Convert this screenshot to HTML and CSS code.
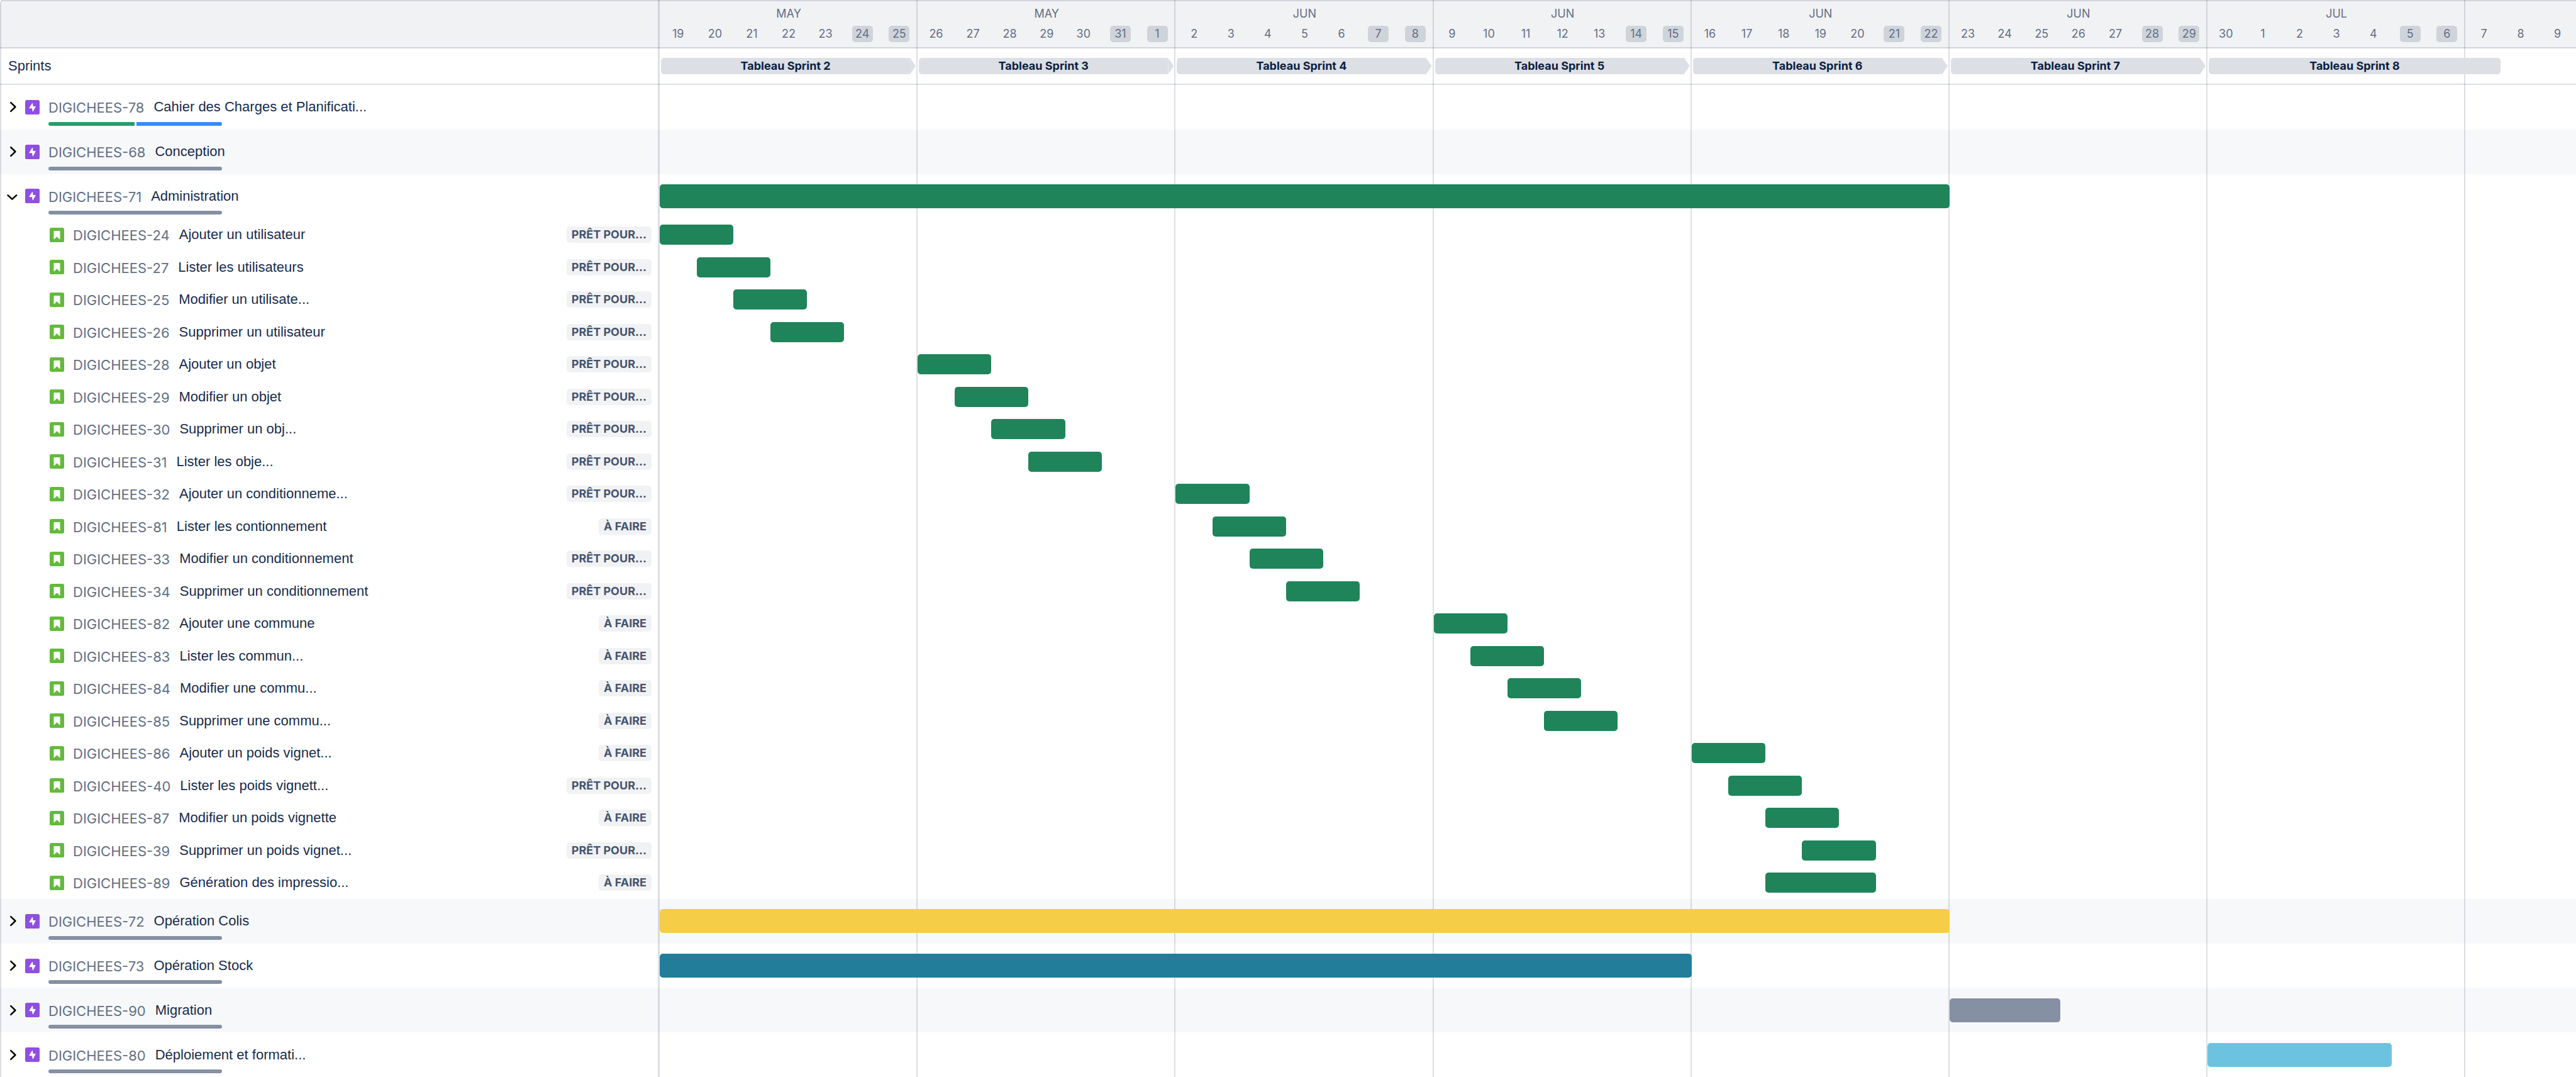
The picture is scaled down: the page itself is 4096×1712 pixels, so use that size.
FILE: index.html
```html
<!DOCTYPE html>
<html lang="fr">
<head>
<meta charset="utf-8">
<title>Chronologie DIGICHEES</title>
<link rel="stylesheet" href="styles.css">
</head>
<body>
<svg class="sprite" aria-hidden="true">
  <symbol id="i-right" viewBox="0 0 24 24"><path d="M8.700 3.800l8.600 8.200-8.600 8.200" fill="none" stroke="currentColor" stroke-width="3" stroke-linecap="round" stroke-linejoin="round"/></symbol>
  <symbol id="i-down" viewBox="0 0 24 24"><path d="M3 10l8.200 7.500 8.200-7.500" fill="none" stroke="currentColor" stroke-width="3" stroke-linecap="round" stroke-linejoin="round"/></symbol>
  <symbol id="i-epic" viewBox="0 0 16 16"><rect width="16" height="16" rx="2" fill="#904ee2"/><path d="M8 3.800 4.900 8.800H8l.5 3.500 2.700-5H8.400z" fill="#fff" stroke="#fff" stroke-width=".8" stroke-linejoin="round"/></symbol>
  <symbol id="i-story" viewBox="0 0 16 16"><rect width="16" height="16" rx="2" fill="#63ba3c"/><path d="M5.200 3.400h5.600a.7.7 0 0 1 .7.7v8.200c0 .5-.5.700-.8.300L8 9.900l-2.700 2.700c-.3.400-.8.200-.8-.3V4.100a.7.7 0 0 1 .7-.7z" fill="#fff"/></symbol>
</svg>
<main class="chart" id="chart"></main>
<script src="app.js"></script>
</body>
</html>
```
FILE: styles.css
```css
:root {
  --sidebar: 1049px;
  --line: rgba(9, 30, 66, 0.14);
  --text: #172b4d;
  --subtle: #626f86;
  --radius: 5px;
}

* { box-sizing: border-box; }

body {
  margin: 0;
  background: #fff;
  color: var(--text);
  font-family: "Liberation Sans", Arial, sans-serif;
  font-size: 22px;
  line-height: 26px;
}

.sprite { position: absolute; width: 0; height: 0; }

.chart {
  position: relative;
  display: flex;
  flex-direction: column;
  min-height: 100vh;
  border-top-left-radius: var(--radius);
  overflow: hidden;
}

/* Every row: issue details on the left, 52 days on the right */
.row,
.gridlines {
  display: grid;
  grid-template-columns: var(--sidebar) minmax(0, 1fr);
}

.days {
  display: grid;
  grid-template-columns: repeat(52, minmax(0, 1fr));
  align-items: center;
}

.header {
  flex: none;
  background: #f1f2f4;
  border-top: 2px solid #d1d5db;
  border-bottom: 2px solid #d1d5db;
}

.header .days {
  padding: 7px 0 8px;
  row-gap: 6px;
  color: var(--subtle);
  font-family: Inter, sans-serif;
  font-size: 18px;
  text-align: center;
}

.month { grid-row: 1; }

.day {
  grid-row: 2;
  justify-self: center;
  width: 33px;
  border-radius: var(--radius);
}

.day.weekend { background: #cfd4db; }

.sprints {
  flex: none;
  padding: 15px 0;
  border-bottom: 2px solid #dcdfe4;
}

.sprints .title { padding-left: 13px; }

.sprint {
  position: relative;
  grid-row: 1;
  z-index: 1;
  display: flex;
  margin: 0 3px 0 2px;
  color: #091e42;
  font-family: Inter, sans-serif;
  font-size: 18px;
  font-weight: 700;
  text-align: center;
}

.sprint span {
  flex: 1;
  border-radius: var(--radius) 0 0 var(--radius);
  background: #dcdfe4;
}

.sprint::after {
  content: "";
  width: 9px;
  background: #dcdfe4;
  clip-path: polygon(0 0, 100% 50%, 0 100%);
}

.sprint.open span { border-radius: var(--radius); }
.sprint.open::after { display: none; }

.epic { flex: 88 0 0; }
.story { flex: 64 0 0; }
.striped { background: #f7f8fa; }

.issue {
  position: relative;
  display: flex;
  align-items: center;
  min-width: 0;
}

.epic .issue { padding-left: 10px; }
.story .issue { padding: 0 13px 0 79px; }

.toggle {
  display: flex;
  margin: 0 10px 0 0;
  padding: 0;
  border: 0;
  background: none;
  color: #000;
}

.toggle svg { width: 20px; height: 20px; }

.type {
  flex: none;
  width: 23px;
  height: 23px;
  margin-right: 14px;
}

.key {
  padding-top: 2px;
  margin-right: 15px;
  color: var(--subtle);
  font-family: Inter, sans-serif;
  text-decoration: none;
}

.status {
  margin-left: auto;
  padding: 0 8px;
  border-radius: var(--radius);
  background: #f1f2f4;
  color: #44546f;
  font-family: Inter, sans-serif;
  font-size: 18px;
  font-weight: 700;
}

.progress {
  position: absolute;
  left: 77px;
  bottom: 6px;
  display: flex;
  gap: 3px;
  width: 276px;
  height: 6px;
  border-radius: 3px;
  overflow: hidden;
}

.progress i { flex: 1; }

.bar {
  position: relative;
  z-index: 1;
  height: 32px;
  border-radius: var(--radius);
}

.epic .bar { height: 38px; }

.green { background: #1f845a; }
.yellow { background: #f5cd47; }
.teal { background: #227d9b; }
.gray { background: #8590a2; }
.sky { background: #6cc3e0; }
.done { background: #22a06b; }
.doing { background: #388bff; }

/* Week separators behind the bars */
.gridlines {
  position: absolute;
  inset: 0;
  border-left: 2px solid var(--line);
  border-top-left-radius: var(--radius);
  grid-template-columns: calc(var(--sidebar) - 2px) minmax(0, 1fr);
  pointer-events: none;
}

.gridlines .side { border-right: 3px solid var(--line); }
.gridlines .days { align-items: stretch; }
.gridlines .week { border-right: 2px solid var(--line); }
```
FILE: app.js
```js
const months = ["MAY", "MAY", "JUN", "JUN", "JUN", "JUN", "JUL"];
const firstDay = new Date(Date.UTC(2025, 4, 19));
const dayCount = 52;

// Epics: key, name, bar start, bar length, colour, progress segments
const epics = [
  [78, "Cahier des Charges et Planificati...", 0, 0, "", ["done", "doing"]],
  [68, "Conception", 0, 0, "", ["gray"]],
  [71, "Administration", 1, 35, "green", ["gray"]],
  [72, "Opération Colis", 1, 35, "yellow", ["gray"]],
  [73, "Opération Stock", 1, 28, "teal", ["gray"]],
  [90, "Migration", 36, 3, "gray", ["gray"]],
  [80, "Déploiement et formati...", 43, 5, "sky", ["gray"]]
];

const READY = "PRÊT POUR...";
const TODO = "À FAIRE";

// Stories of the expanded epic: key, name, status, bar start, bar length
const stories = [
  [24, "Ajouter un utilisateur", READY, 1, 2],
  [27, "Lister les utilisateurs", READY, 2, 2],
  [25, "Modifier un utilisate...", READY, 3, 2],
  [26, "Supprimer un utilisateur", READY, 4, 2],
  [28, "Ajouter un objet", READY, 8, 2],
  [29, "Modifier un objet", READY, 9, 2],
  [30, "Supprimer un obj...", READY, 10, 2],
  [31, "Lister les obje...", READY, 11, 2],
  [32, "Ajouter un conditionneme...", READY, 15, 2],
  [81, "Lister les contionnement", TODO, 16, 2],
  [33, "Modifier un conditionnement", READY, 17, 2],
  [34, "Supprimer un conditionnement", READY, 18, 2],
  [82, "Ajouter une commune", TODO, 22, 2],
  [83, "Lister les commun...", TODO, 23, 2],
  [84, "Modifier une commu...", TODO, 24, 2],
  [85, "Supprimer une commu...", TODO, 25, 2],
  [86, "Ajouter un poids vignet...", TODO, 29, 2],
  [40, "Lister les poids vignett...", READY, 30, 2],
  [87, "Modifier un poids vignette", TODO, 31, 2],
  [39, "Supprimer un poids vignet...", READY, 32, 2],
  [89, "Génération des impressio...", TODO, 31, 3]
];

const span = (start, length) => `style="grid-column:${start} / span ${length}"`;
const icon = (name, cls) => `<svg class="${cls}" aria-hidden="true"><use href="#i-${name}"/></svg>`;
const bar = (start, length, colour) => length ? `<div class="bar ${colour}" ${span(start, length)}></div>` : "";
const label = (key, name) => `<a class="key" href="#${key}">DIGICHEES-${key}</a><span>${name}</span>`;

function header() {
  let cells = months.map((m, i) => `<div class="month" ${span(i * 7 + 1, 7)}>${m}</div>`).join("");
  for (let i = 0; i < dayCount; i++) {
    const date = new Date(firstDay.getTime() + i * 864e5);
    const weekend = i % 7 > 4 ? " weekend" : "";
    cells += `<div class="day${weekend}" ${span(i + 1, 1)}>${date.getUTCDate()}</div>`;
  }
  return `<header class="row header"><div></div><div class="days">${cells}</div></header>`;
}

function sprints() {
  let cells = "";
  for (let i = 0; i < 7; i++) {
    const last = i === 6;
    cells += `<div class="sprint${last ? " open" : ""}" ${span(i * 7 + 1, last ? 8 : 7)}><span>Tableau Sprint ${i + 2}</span></div>`;
  }
  return `<div class="row sprints"><div class="title">Sprints</div><div class="days">${cells}</div></div>`;
}

function epicRow([key, name, start, length, colour, progress], index) {
  const open = key === 71;
  return `<div class="row epic${index % 2 ? " striped" : ""}"><div class="issue">
    <button class="toggle" aria-expanded="${open}" aria-label="${name}">${icon(open ? "down" : "right", "")}</button>
    ${icon("epic", "type")}${label(key, name)}
    <div class="progress">${progress.map(p => `<i class="${p}"></i>`).join("")}</div>
  </div><div class="days">${bar(start, length, colour)}</div></div>` + (open ? stories.map(storyRow).join("") : "");
}

function storyRow([key, name, status, start, length]) {
  return `<div class="row story"><div class="issue">${icon("story", "type")}${label(key, name)}
    <span class="status">${status}</span></div>
    <div class="days">${bar(start, length, "green")}</div></div>`;
}

function gridlines() {
  const weeks = months.map((m, i) => `<div class="week" ${span(i * 7 + 1, 7)}></div>`).join("");
  return `<div class="gridlines"><div class="side"></div><div class="days">${weeks}</div></div>`;
}

document.getElementById("chart").innerHTML = header() + sprints() + epics.map(epicRow).join("") + gridlines();
```
